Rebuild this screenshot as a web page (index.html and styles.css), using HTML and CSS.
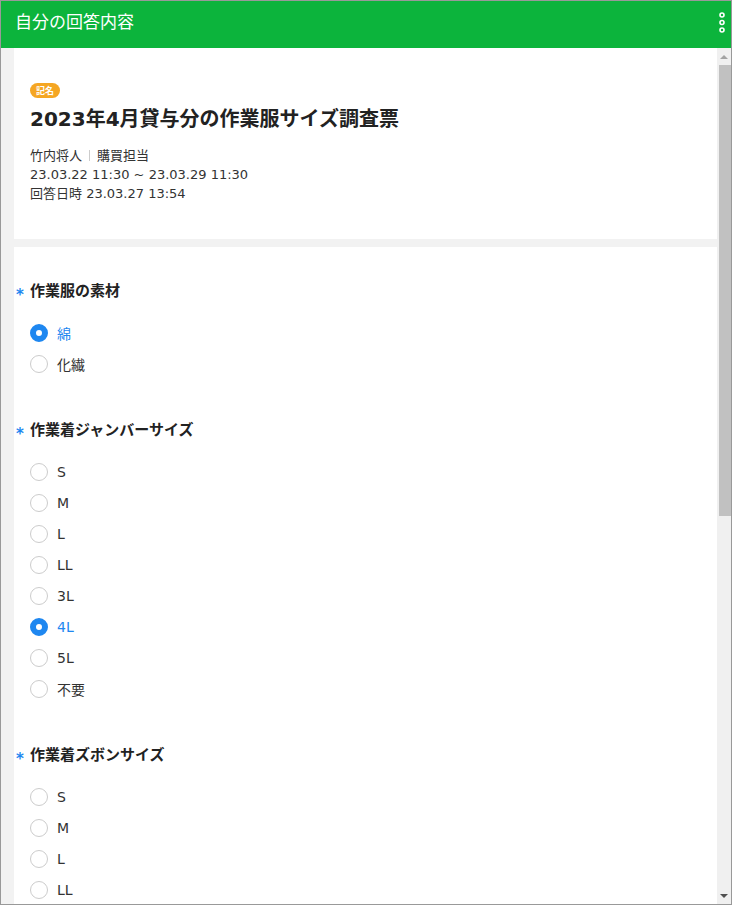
FILE: index.html
```html
<!DOCTYPE html>
<html lang="ja">
<head>
<meta charset="utf-8">
<title>自分の回答内容</title>
<link rel="stylesheet" href="styles.css">
</head>
<body>
<div class="frame">
  <header class="topbar">
    <h1 class="topbar-title">自分の回答内容</h1>
    <svg class="kebab" width="8" height="24" viewBox="0 0 8 24">
      <circle cx="4" cy="5" r="2" fill="none" stroke="#fff" stroke-width="1.6"/>
      <circle cx="4" cy="12.5" r="2" fill="none" stroke="#fff" stroke-width="1.6"/>
      <circle cx="4" cy="20" r="2" fill="none" stroke="#fff" stroke-width="1.6"/>
    </svg>
  </header>
  <div class="body-row">
    <main class="content">
      <section class="card summary">
        <span class="badge">記名</span>
        <h2 class="survey-title">2023年4月貸与分の作業服サイズ調査票</h2>
        <div class="meta">
          <div class="meta-line">竹内将人<span class="sep"></span>購買担当</div>
          <div class="meta-line">23.03.22 11:30 ~ 23.03.29 11:30</div>
          <div class="meta-line">回答日時 23.03.27 13:54</div>
        </div>
      </section>
      <section class="card questions">
        <div class="question">
          <h3 class="q-title"><span class="req">*</span>作業服の素材</h3>
          <ul class="options">
            <li class="option checked"><span class="radio"></span>綿</li>
            <li class="option"><span class="radio"></span>化繊</li>
          </ul>
        </div>
        <div class="question">
          <h3 class="q-title"><span class="req">*</span>作業着ジャンバーサイズ</h3>
          <ul class="options">
            <li class="option"><span class="radio"></span>S</li>
            <li class="option"><span class="radio"></span>M</li>
            <li class="option"><span class="radio"></span>L</li>
            <li class="option"><span class="radio"></span>LL</li>
            <li class="option"><span class="radio"></span>3L</li>
            <li class="option checked"><span class="radio"></span>4L</li>
            <li class="option"><span class="radio"></span>5L</li>
            <li class="option"><span class="radio"></span>不要</li>
          </ul>
        </div>
        <div class="question">
          <h3 class="q-title"><span class="req">*</span>作業着ズボンサイズ</h3>
          <ul class="options">
            <li class="option"><span class="radio"></span>S</li>
            <li class="option"><span class="radio"></span>M</li>
            <li class="option"><span class="radio"></span>L</li>
            <li class="option"><span class="radio"></span>LL</li>
          </ul>
        </div>
      </section>
    </main>
    <div class="scrollbar">
      <div class="sb-btn"><span class="arrow-up"></span></div>
      <div class="sb-track"><div class="sb-thumb"></div></div>
      <div class="sb-btn"><span class="arrow-down"></span></div>
    </div>
  </div>
</div>
</body>
</html>
```

FILE: styles.css
```css
* { box-sizing: border-box; }
html, body { margin: 0; padding: 0; }
body {
  font-family: "DejaVu Sans", "Noto Sans CJK JP", sans-serif;
  color: #333;
  background: #fff;
}
.frame {
  width: 732px;
  height: 905px;
  border: 1px solid #999;
  display: flex;
  flex-direction: column;
  overflow: hidden;
}
.topbar {
  height: 47px;
  flex: none;
  background: #0cb43c;
  display: flex;
  align-items: flex-start;
  justify-content: space-between;
  padding: 0 5px 0 14px;
}
.topbar-title {
  margin: 0;
  padding-top: 8px;
  font-family: "Noto Sans CJK JP", sans-serif;
  font-size: 17px;
  font-weight: normal;
  color: #fff;
  line-height: 24px;
}
.kebab { margin-top: 9px; }
.body-row {
  flex: 1;
  display: flex;
  min-height: 0;
}
.content {
  flex: 1;
  background: #f2f2f2;
  padding-left: 13px;
  overflow: hidden;
}
.card { background: #fff; }
.summary {
  height: 191px;
  padding: 35px 16px 0 16px;
  margin-bottom: 8px;
}
.badge {
  display: block;
  width: fit-content;
  background: #f5a623;
  color: #fff;
  font-family: "Noto Sans CJK JP", sans-serif;
  font-size: 9px;
  font-weight: bold;
  line-height: 15px;
  height: 15px;
  padding: 0 6px;
  border-radius: 8px;
}
.survey-title {
  margin: 7px 0 0 0;
  font-size: 20px;
  line-height: 28px;
  font-weight: bold;
  color: #222;
}
.meta {
  margin-top: 13px;
  font-size: 13px;
  line-height: 19px;
  color: #333;
}
.sep {
  display: inline-block;
  width: 1px;
  height: 11px;
  background: #ccc;
  margin: 0 7px;
  vertical-align: -1px;
}
.questions {
  padding: 32px 16px 0 16px;
}
.question { margin-bottom: 39px; }
.q-title {
  position: relative;
  margin: 0;
  font-size: 15px;
  line-height: 24px;
  font-weight: bold;
  color: #222;
}
.req {
  position: absolute;
  left: -14px;
  top: 4px;
  color: #1e87f0;
  font-size: 15px;
  font-weight: bold;
}
.options {
  list-style: none;
  margin: 14px 0 0 0;
  padding: 0;
}
.option {
  display: flex;
  align-items: center;
  height: 31px;
  font-size: 14px;
  color: #333;
}
.radio {
  width: 18px;
  height: 18px;
  border-radius: 50%;
  border: 1px solid #ccc;
  margin-right: 9px;
  flex: none;
  background: #fff;
}
.option.checked { color: #1e87f0; }
.option.checked .radio {
  border: 6px solid #1e87f0;
  background: #fff;
}
.scrollbar {
  width: 14px;
  flex: none;
  background: #f0f0f0;
  display: flex;
  flex-direction: column;
}
.sb-btn {
  height: 17px;
  flex: none;
  display: flex;
  align-items: center;
  justify-content: center;
}
.arrow-up {
  width: 0; height: 0;
  border-left: 4px solid transparent;
  border-right: 4px solid transparent;
  border-bottom: 4px solid #a3a3a3;
}
.arrow-down {
  width: 0; height: 0;
  border-left: 4px solid transparent;
  border-right: 4px solid transparent;
  border-top: 4px solid #505050;
}
.sb-track {
  flex: 1;
  padding: 0 0 0 2px;
}
.sb-thumb {
  height: 451px;
  background: #c1c1c1;
}
```
